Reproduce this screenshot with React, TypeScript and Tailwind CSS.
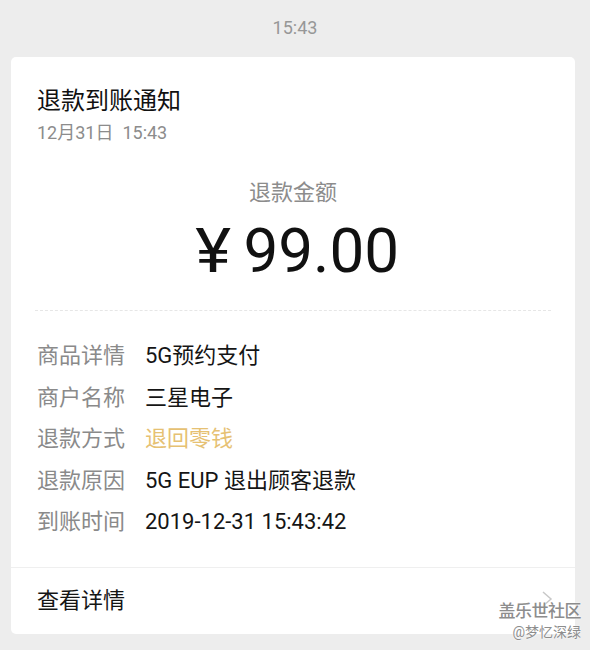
import React from "react";

const rows: { label: string; value: string; gold?: boolean }[] = [
  { label: "商品详情", value: "5G预约支付" },
  { label: "商户名称", value: "三星电子" },
  { label: "退款方式", value: "退回零钱", gold: true },
  { label: "退款原因", value: "5G EUP 退出顾客退款" },
  { label: "到账时间", value: "2019-12-31 15:43:42" },
];

export default function App() {
  return (
    <div
      className="relative w-[590px] h-[650px] overflow-hidden bg-[#ededed]"
      style={{ fontFamily: 'Roboto, "Noto Sans CJK SC", sans-serif' }}
    >
      <div className="h-[57px] flex items-center justify-center pb-[2px] text-[18px] text-[#979797]">
        15:43
      </div>

      <div className="ml-[11px] w-[564px] rounded-[5px] bg-white">
        <div className="pl-[26px] pt-[29px]">
          <div className="text-[24px] leading-[30px] text-[#111]">退款到账通知</div>
          <div className="mt-[6px] text-[18px] leading-[22px] text-[#8c8c8c]">
            12月31日&nbsp;&nbsp;15:43
          </div>
        </div>

        <div className="mt-[35px] flex flex-col items-center">
          <div className="text-[22px] leading-[28px] text-[#8c8c8c]">退款金额</div>
          <div className="mt-[9px] flex items-center pl-[10px] text-[62px] leading-[70px] text-[#111]">
            <span className="mr-[14px] scale-x-110">¥</span>
            <span>99.00</span>
          </div>
        </div>

        <div className="mx-[24px] mt-[24px] border-t border-dashed border-[#e6e6e6]" />

        <div className="pl-[26px] pt-[24px] pb-[24px]">
          {rows.map((r) => (
            <div key={r.label} className="flex h-[41.5px] items-center text-[22px]">
              <span className="w-[108px] text-[#8a8a8a]">{r.label}</span>
              <span className={r.gold ? "text-[#e6c173]" : "text-[#151515]"}>{r.value}</span>
            </div>
          ))}
        </div>

        <div className="flex h-[67px] items-center justify-between border-t border-[#efefef] pl-[26px] pr-[22px]">
          <span className="text-[22px] text-[#151515]">查看详情</span>
          <svg width="12" height="18" viewBox="0 0 12 18" fill="none" className="mb-[4px]">
            <polyline points="2,2 10,9 2,16" stroke="#c8c8c8" strokeWidth="1.5" />
          </svg>
        </div>
      </div>

      <div className="absolute right-[9px] bottom-[8px] flex flex-col items-end text-[#8d8d8d] [text-shadow:0_0_2px_#ffffff,0_0_1px_#ffffff]">
        <span className="text-[17px] leading-[22px] font-medium tracking-[-0.5px]">盖乐世社区</span>
        <span className="text-[14px] leading-[20px]">@梦忆深绿</span>
      </div>
    </div>
  );
}
